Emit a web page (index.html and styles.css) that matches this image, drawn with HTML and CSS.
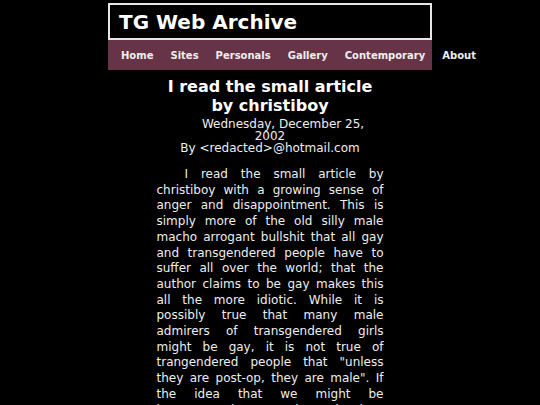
FILE: index.html
```html
<!DOCTYPE html>
<html>
<head>
<meta charset="utf-8">
<link rel="stylesheet" href="styles.css">
</head>
<body>
<div class="page">
  <div class="masthead"><span class="site-title">TG Web Archive</span></div>
  <nav class="menu">
    <a class="menu-item" href="#">Home</a>
    <a class="menu-item" href="#">Sites</a>
    <a class="menu-item" href="#">Personals</a>
    <a class="menu-item" href="#">Gallery</a>
    <a class="menu-item" href="#">Contemporary</a>
    <a class="menu-item" href="#">About</a>
  </nav>
</div>
<div class="article">
  <h1 class="article-title">I read the small article by christiboy</h1>
  <p class="byline">Wednesday, December 25, 2002<br>By &lt;redacted&gt;@hotmail.com</p>
  <p class="body-text">I read the small article by christiboy with a growing sense of anger and disappointment. This is simply more of the old silly male macho arrogant bullshit that all gay and transgendered people have to suffer all over the world; that the author claims to be gay makes this all the more idiotic. While it is possibly true that many male admirers of transgendered girls might be gay, it is not true of trangendered people that "unless <span class="snug">they are post-op, they are male". If</span> the idea that we might be heterosexual women is so hard to understand, then perhaps the author should think again.</p>
</div>
</body>
</html>
```
FILE: styles.css
```css
html, body {
  margin: 0;
  padding: 0;
  background: #000;
  color: #eeeeee;
  font-family: "DejaVu Sans", Verdana, sans-serif;
}
.page {
  width: 324px;
  margin: 0 auto;
  padding-top: 3px;
}
.masthead {
  border: 2px solid #e6e6e6;
  height: 32px;
  display: flex;
  align-items: center;
  padding-left: 9px;
  padding-top: 1px;
  box-sizing: content-box;
}
.site-title {
  color: #fff;
  font-weight: bold;
  font-size: 20px;
}
.menu {
  margin-top: 0;
  background: #663347;
  height: 29px;
  display: flex;
  align-items: center;
  padding-left: 4.5px;
  padding-top: 1px;
  white-space: nowrap;
}
.menu-item {
  color: #eeeeee;
  text-decoration: none;
  font-weight: bold;
  font-size: 10px;
  padding: 0 8.5px;
  flex: none;
}
.article {
  width: 227px;
  margin: 0 auto;
  padding-top: 7px;
}
.article-title {
  margin: 0;
  font-size: 16px;
  text-align: center;
  color: #fff;
}
.byline {
  width: 210px;
  margin: 3px auto 0;
  font-size: 12px;
  line-height: 12px;
  text-align: center;
  text-indent: 26px;
}
.body-text {
  margin: 13px 0 0;
  font-size: 12px;
  line-height: 15.7px;
  text-align: justify;
  text-indent: 28px;
}
.snug {
  word-spacing: -0.6px;
}
```
